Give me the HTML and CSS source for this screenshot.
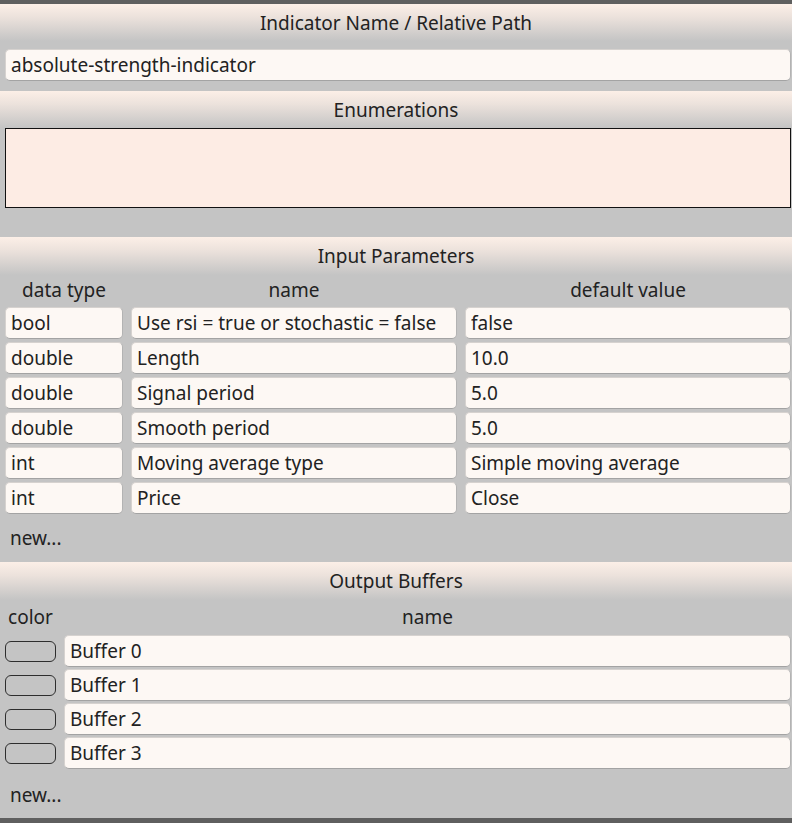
FILE: index.html
```html
<!DOCTYPE html>
<html lang="en">
<head>
    <meta charset="UTF-8">
    <meta name="viewport" content="width=device-width, initial-scale=1.0">
    <title>Indicator Editor</title>
    <link rel="stylesheet" href="styles.css">
</head>
<body>
    <div class="editor">
        <div class="section-title">Indicator Name / Relative Path</div>
        <div class="name-row">
            <input class="field" type="text" value="absolute-strength-indicator">
        </div>

        <div class="section-title enum-title">Enumerations</div>
        <textarea class="enum-box"></textarea>
        <div class="spacer"></div>

        <div class="section-title">Input Parameters</div>
        <div class="params">
            <div class="col-head">data type</div>
            <div class="col-head">name</div>
            <div class="col-head">default value</div>

            <input class="field" type="text" value="bool">
            <input class="field" type="text" value="Use rsi = true or stochastic = false">
            <input class="field" type="text" value="false">

            <input class="field" type="text" value="double">
            <input class="field" type="text" value="Length">
            <input class="field" type="text" value="10.0">

            <input class="field" type="text" value="double">
            <input class="field" type="text" value="Signal period">
            <input class="field" type="text" value="5.0">

            <input class="field" type="text" value="double">
            <input class="field" type="text" value="Smooth period">
            <input class="field" type="text" value="5.0">

            <input class="field" type="text" value="int">
            <input class="field" type="text" value="Moving average type">
            <input class="field" type="text" value="Simple moving average">

            <input class="field" type="text" value="int">
            <input class="field" type="text" value="Price">
            <input class="field" type="text" value="Close">
        </div>
        <div class="new-link">new...</div>

        <div class="section-title">Output Buffers</div>
        <div class="buffers">
            <div class="col-head">color</div>
            <div class="col-head">name</div>

            <div class="swatch-cell"><button class="swatch"></button></div>
            <input class="field" type="text" value="Buffer 0">

            <div class="swatch-cell"><button class="swatch"></button></div>
            <input class="field" type="text" value="Buffer 1">

            <div class="swatch-cell"><button class="swatch"></button></div>
            <input class="field" type="text" value="Buffer 2">

            <div class="swatch-cell"><button class="swatch"></button></div>
            <input class="field" type="text" value="Buffer 3">
        </div>
        <div class="new-link last">new...</div>
    </div>
</body>
</html>
```

FILE: styles.css
```css
body {
    margin: 0;
    background-color: #5f5f5f;
    font-family: "Noto Sans", "Open Sans", sans-serif;
    font-size: 19px;
    color: #222222;
}
.editor {
    margin-top: 4px;
    height: 814px;
    background-color: #c4c4c4;
    overflow: hidden;
}
/* Section headers fade from a warm white down into the panel grey */
.section-title {
    height: 38px;
    display: flex;
    align-items: center;
    justify-content: center;
    background: linear-gradient(to bottom, #fcefe7 0%, #ece2dc 35%, #c4c4c4 100%);
}
.section-title:first-child {
    height: 37px;
}
.enum-title {
    margin-top: 10px;
    height: 37px;
}
.name-row {
    padding: 8px 1px 0 5px;
}
.field {
    box-sizing: border-box;
    width: 100%;
    height: 32px;
    margin: 0;
    padding: 0 5px;
    font-family: inherit;
    font-size: 19px;
    color: #222222;
    background-color: #fdf8f4;
    border: 1px solid #d6d2cf;
    border-bottom-color: #a3a3a3;
    border-right-color: #b3b3b3;
    border-radius: 5px;
    outline: none;
}
.enum-box {
    display: block;
    box-sizing: border-box;
    width: 786px;
    height: 80px;
    margin: 0 1px 0 5px;
    background-color: #fdece4;
    border: 1px solid #111111;
    resize: none;
}
.spacer {
    height: 29px;
}
.col-head {
    text-align: center;
    height: 28px;
    line-height: 28px;
}
.params {
    display: grid;
    grid-template-columns: 118px 1fr 1fr;
    gap: 3px 8px;
    padding: 1px 1px 0 5px;
}
.buffers {
    display: grid;
    grid-template-columns: 51px 1fr;
    gap: 2px 8px;
    padding: 3px 1px 0 5px;
}
.buffers .col-head {
    margin-bottom: 2px;
}
.swatch-cell {
    display: flex;
    align-items: center;
}
.swatch {
    width: 51px;
    height: 21px;
    padding: 0;
    background-color: #c4c4c4;
    border: 1px solid #2e2e2e;
    border-radius: 6px;
}
.new-link {
    height: 48px;
    line-height: 48px;
    padding-left: 10px;
}
.new-link.last {
    height: 52px;
    line-height: 52px;
}
```
